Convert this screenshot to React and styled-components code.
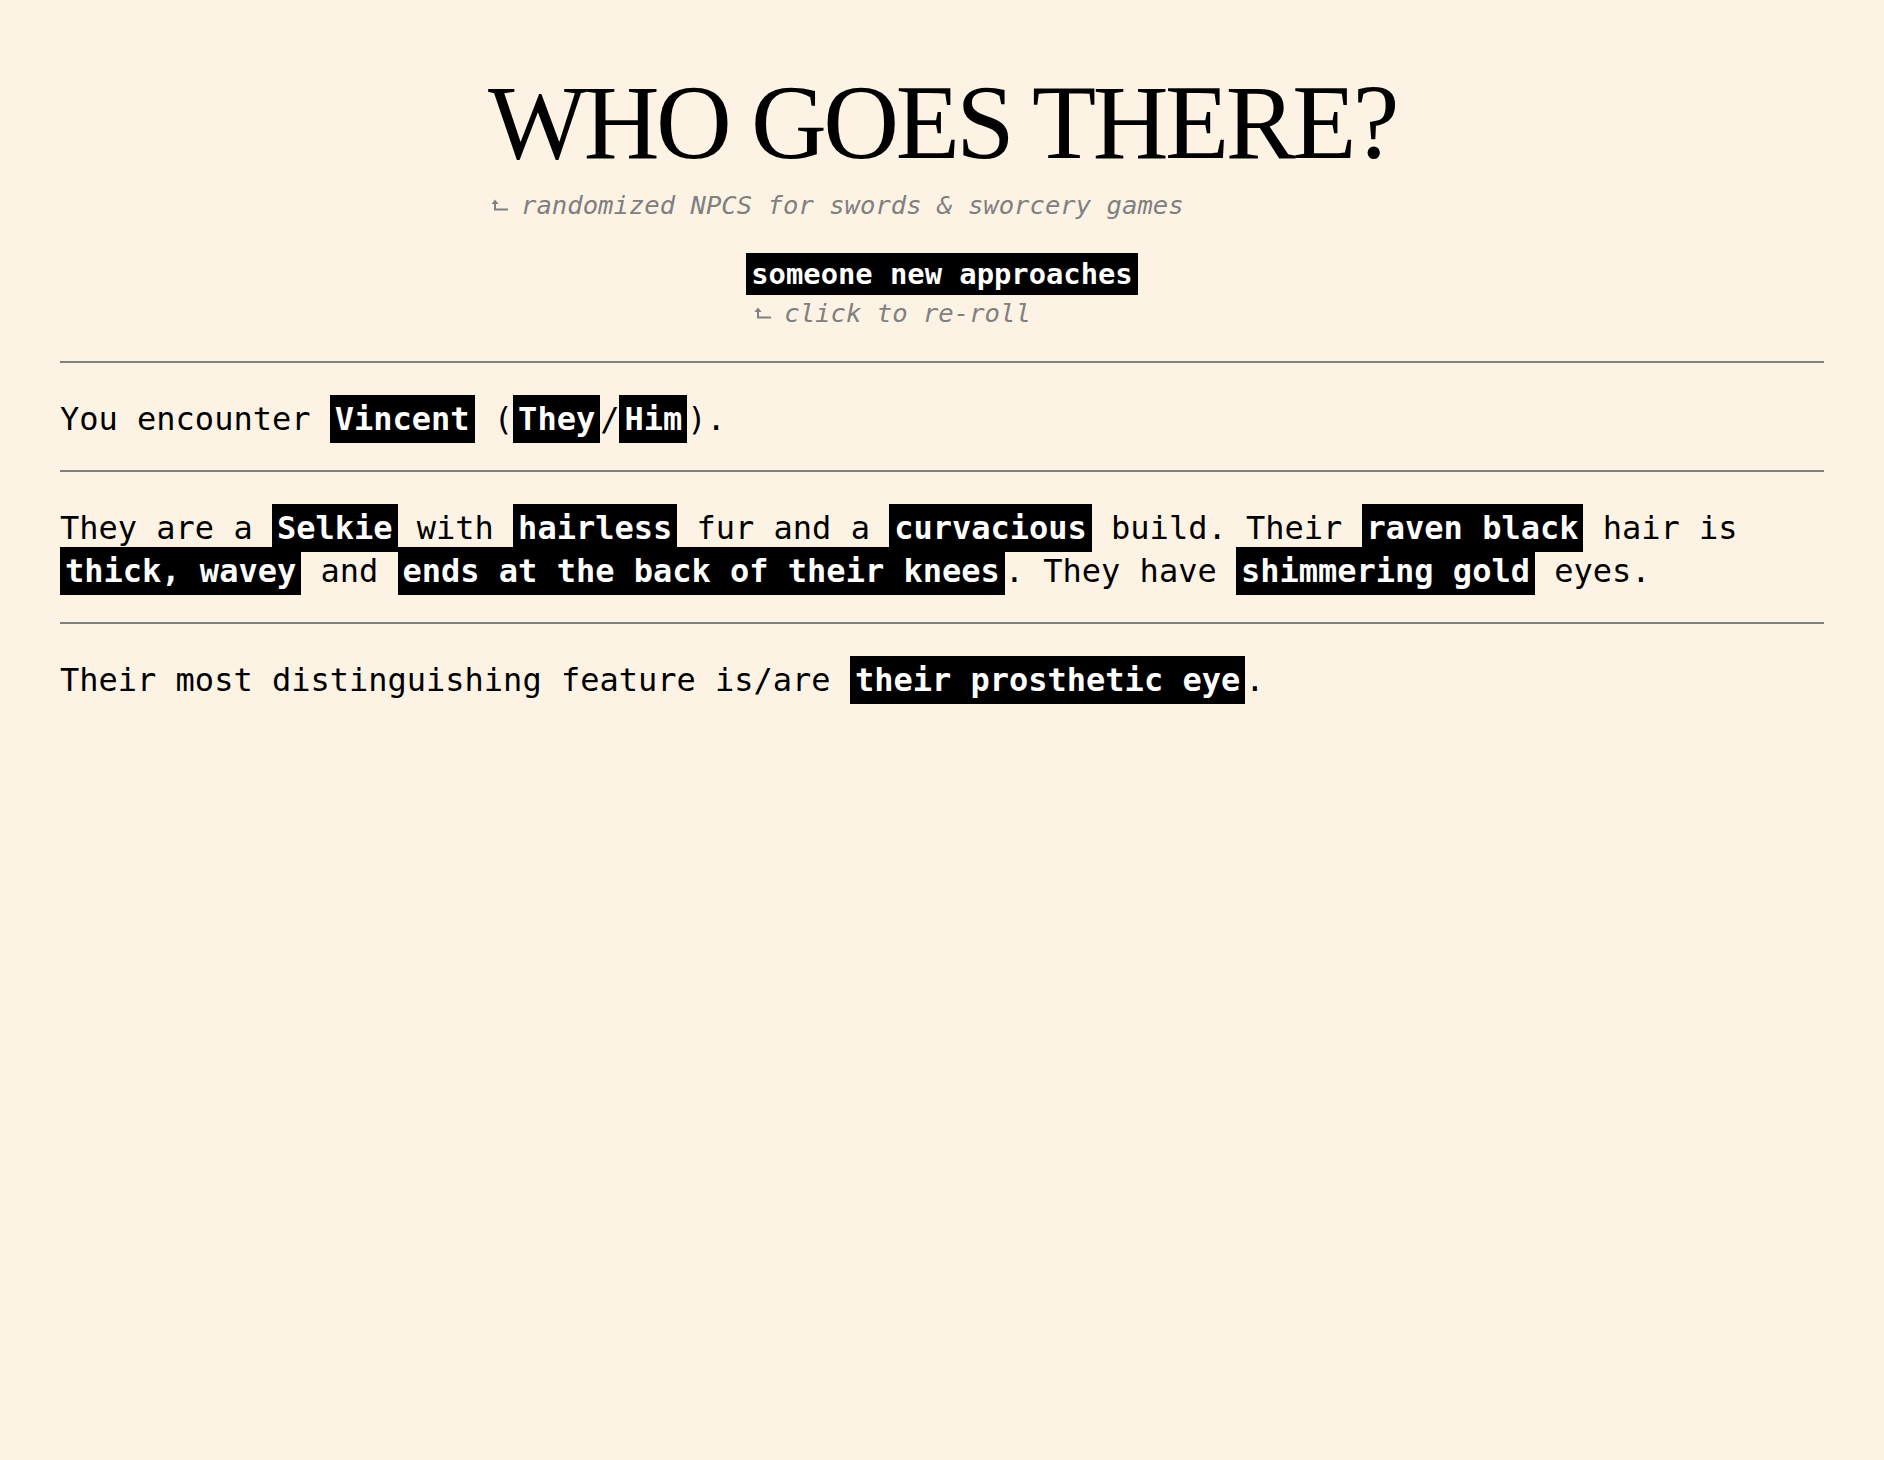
import React from "react";
import styled, { createGlobalStyle } from "styled-components";

const GlobalStyle = createGlobalStyle`
  html, body {
    margin: 0;
    padding: 0;
    background: #fdf3e5;
  }
  body {
    font-family: "DejaVu Sans Mono", "Liberation Mono", monospace;
    color: #000;
  }
`;

const Page = styled.main`
  padding: 0 60px;
  font-size: 32px;
`;

const Masthead = styled.header`
  display: flex;
  flex-direction: column;
  align-items: center;
  padding-top: 70px;
`;

const TitleBlock = styled.div`
  display: flex;
  flex-direction: column;
  align-items: flex-start;
`;

const Title = styled.h1`
  margin: 0;
  font-family: "Liberation Serif", "DejaVu Serif", serif;
  font-weight: normal;
  font-size: 105px;
  line-height: 1;
  letter-spacing: -3.5px;
  white-space: nowrap;
`;

const Note = styled.p`
  display: flex;
  align-items: center;
  margin: ${(p) => p.$top || 0}px 0 0 ${(p) => p.$indent || 0}px;
  font-size: 25.6px;
  line-height: 30.7px;
  font-style: italic;
  color: #808080;
  white-space: nowrap;
`;

const ArrowMark = styled.svg`
  width: 18px;
  height: 12px;
  margin-right: 12px;
  flex: none;
`;

const RerollBlock = styled.div`
  display: flex;
  flex-direction: column;
  align-items: flex-start;
  margin-top: 32px;
`;

const RerollButton = styled.button`
  font-family: inherit;
  font-size: 28.8px;
  font-weight: bold;
  line-height: 34px;
  padding: 4px 5px;
  border: none;
  border-radius: 0;
  background: #000;
  color: #fff;
  cursor: pointer;
`;

const Divider = styled.hr`
  margin: ${(p) => p.$top || 0}px 0 0;
  border: none;
  border-top: 2px solid #808080;
`;

const Para = styled.p`
  margin: 35px 0 29px;
  line-height: 43px;
`;

const Pick = styled.span`
  background: #000;
  color: #fff;
  font-weight: bold;
  padding: 5px;
`;

const Arrow = () => (
  <ArrowMark viewBox="0 0 18 12">
    <path d="M0.5 5 L4 0.5 L7.5 5 Z" fill="#808080" />
    <path d="M4 4 V10.5 H17" fill="none" stroke="#808080" strokeWidth="2" />
  </ArrowMark>
);

export default function App() {
  return (
    <>
      <GlobalStyle />
      <Page>
        <Masthead>
          <TitleBlock>
            <Title>WHO GOES THERE?</Title>
            <Note $top={15} $indent={3}>
              <Arrow />
              randomized NPCS for swords &amp; sworcery games
            </Note>
          </TitleBlock>
          <RerollBlock>
            <RerollButton>someone new approaches</RerollButton>
            <Note $top={3} $indent={8}>
              <Arrow />
              click to re-roll
            </Note>
          </RerollBlock>
        </Masthead>

        <Divider $top={33} />
        <Para>
          You encounter <Pick>Vincent</Pick> (<Pick>They</Pick>/<Pick>Him</Pick>).
        </Para>
        <Divider />
        <Para>
          They are a <Pick>Selkie</Pick> with <Pick>hairless</Pick> fur and a{" "}
          <Pick>curvacious</Pick> build. Their <Pick>raven black</Pick> hair is{" "}
          <Pick>thick, wavey</Pick> and <Pick>ends at the back of their knees</Pick>.
          They have <Pick>shimmering gold</Pick> eyes.
        </Para>
        <Divider />
        <Para>
          Their most distinguishing feature is/are <Pick>their prosthetic eye</Pick>.
        </Para>
      </Page>
    </>
  );
}
